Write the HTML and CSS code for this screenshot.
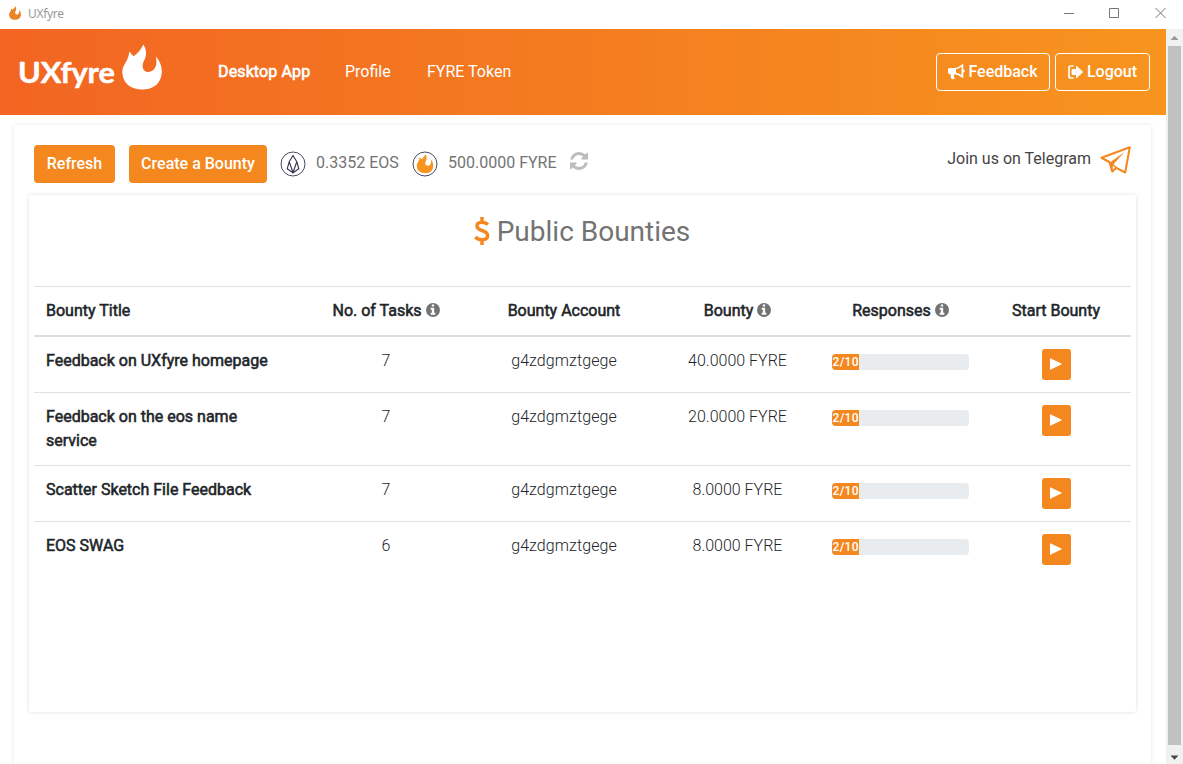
FILE: index.html
```html
<!DOCTYPE html>
<html lang="en">
<head>
<meta charset="utf-8">
<title>UXfyre</title>
<link rel="stylesheet" href="styles.css">
</head>
<body>
<svg class="sprite" aria-hidden="true">
  <symbol id="flame" viewBox="0 0 122 138"><path d="M22 22L35 36Q54 24 65 0C78 20 74 38 66 52C58 70 66 84 80 84C99 83 110 64 103 36C120 56 124 76 120 96C114 124 92 138 62 138C26 138 2 118 1 86C0 62 20 54 22 22Z"/></symbol>
  <symbol id="info" viewBox="0 0 1536 1536"><path fill-rule="evenodd" d="M1536 768a768 768 0 1 1-1536 0a768 768 0 0 1 1536 0zM1024 1248v-160q0-14-9-23t-23-9h-96V544q0-14-9-23t-23-9H544q-14 0-23 9t-9 23v160q0 14 9 23t23 9h96v320h-96q-14 0-23 9t-9 23v160q0 14 9 23t23 9h448q14 0 23-9t9-23zM896 352V192q0-14-9-23t-23-9H672q-14 0-23 9t-9 23v160q0 14 9 23t23 9h192q14 0 23-9t9-23z"/></symbol>
  <symbol id="play" viewBox="0 0 12 12"><path d="M.3.2Q0 0 0 .5v11q0 .5.4.3L11.700 6.300q.4-.3 0-.6z"/></symbol>
</svg>
<div class="titlebar">
  <svg class="app-icon"><use href="#flame"/></svg>
  <span class="app-name">UXfyre</span>
  <svg class="window-controls" viewBox="0 0 103 12" fill="none" stroke="#777"><path d="M0 6.500h10M45.500 1.500h9v9h-9zM91.500 1l10 10M101.500 1l-10 10"/></svg>
</div>
<div class="viewport">
  <div class="page">
    <header class="navbar">
      <div class="brand">
        <svg class="wordmark" viewBox="0 0 100 46"><text x="0" y="31" textLength="97" lengthAdjust="spacingAndGlyphs">UXfyre</text></svg>
        <svg class="brand-flame"><use href="#flame"/></svg>
      </div>
      <nav class="nav">
        <a class="nav-link active">Desktop App</a>
        <a class="nav-link profile">Profile</a>
        <a class="nav-link">FYRE Token</a>
      </nav>
      <div class="nav-actions">
        <a class="btn-outline"><svg class="horn" viewBox="0 0 17 16"><path fill-rule="evenodd" d="M14.600 0q.7 0 .7.800v4.700q1.500.3 1.500 1.500t-1.500 1.500v4.700q0 .8-.7.800-4.300-3.500-8.200-3.700-1.300.8-.3 2-.5 1 .9 1.900-.8 1.500-3.300 1-1.300-3-1-5H1.500Q0 10 0 8.600V5.600Q0 4.100 1.500 4.100h4.700Q10 4.100 14.600 0zM13.500 2.800Q10.500 5 8 5.300v3.500q2.800.4 5.500 2.200z"/></svg>Feedback</a>
        <a class="btn-outline logout"><svg class="exit" viewBox="0 0 15 14"><path d="M5.700 1H3Q1 1 1 3v8q0 2 2 2h2.700" fill="none" stroke="#fff" stroke-width="1.700"/><path d="M8 1.200q0-.8.7-.3l6 5.600q.4.500 0 1l-6 5.600q-.7.5-.7-.3V9.900H4.200q-.6 0-.6-.6V4.700q0-.6.6-.6H8z"/></svg>Logout</a>
      </div>
    </header>
    <main class="panel">
      <div class="toolbar">
        <button class="btn">Refresh</button>
        <button class="btn create">Create a Bounty</button>
        <svg class="coin" viewBox="0 0 26 26" fill="none" stroke="#34344e"><circle cx="13" cy="13" r="12" stroke-width=".9"/><path d="M13 4.500L9.200 10.800 7.200 17.800 13 21.800 18.800 17.800 16.800 10.800zM9.200 10.800L13 21.500 16.800 10.800" stroke-width="1.100"/></svg>
        <span class="balance eos">0.3352 EOS</span>
        <svg class="coin" viewBox="0 0 26 26"><circle cx="13" cy="13" r="12" fill="none" stroke="#34344e" stroke-width=".9"/><use class="coin-flame" href="#flame" x="4.500" y="3.200" width="17" height="19"/></svg>
        <span class="balance fyre">500.0000 FYRE</span>
        <svg class="sync" viewBox="0 0 1536 1536"><path d="M1511 928q0 5-1 7-64 268-268 434.500T764 1536q-146 0-282.500-55T238 1324l-129 129q-19 19-45 19t-45-19-19-45V960q0-26 19-45t45-19h448q26 0 45 19t19 45-19 45l-137 137q71 66 161 102t187 36q134 0 250-65t186-179q11-17 53-117 8-23 30-23h192q13 0 22.500 9.500t9.500 22.500zm25-800v448q0 26-19 45t-45 19h-448q-26 0-45-19t-19-45 19-45l138-138Q969 256 768 256q-134 0-250 65T332 500q-11 17-53 117-8 23-30 23H50q-13 0-22.500-9.500T18 608v-7q65-268 270-434.500T768 0q146 0 284 55.500T1297 212l130-129q19-19 45-19t45 19 19 45z"/></svg>
        <span class="telegram">Join us on Telegram</span>
        <svg class="plane" viewBox="0 0 32 30"><path d="M1.500 12.800L29.800 2.200 25.200 27.500 16.300 22.800 12.300 26.600 9.500 17.200z" fill="none" stroke="#f5871f" stroke-width="2" stroke-linejoin="round"/><path d="M1.500 12.800L9.500 17.800 24.500 7 13 19.800 12.300 26.600 9.500 17.800" fill="#f5871f" stroke="none"/><path d="M1.500 12.800L9.500 17.200M13 19.500L16.300 22.800" fill="none" stroke="#f5871f" stroke-width="1.600"/></svg>
      </div>
      <section class="card">
        <h1 class="heading"><svg class="dollar" viewBox="0 0 16 28"><path d="M14 7.500Q11.500 5.300 8 5.300 3 5.400 3 9q0 2.800 5 4.500 5.600 1.600 5.600 5.300 0 3.900-5.600 3.900-4 0-6.700-2.700M8 0v5.500M8 22v6" fill="none" stroke="#f5871f" stroke-width="3.500"/></svg>Public Bounties</h1>
        <table class="bounties">
          <colgroup><col class="c-title"><col class="c-tasks"><col class="c-account"><col class="c-bounty"><col class="c-resp"><col class="c-start"></colgroup>
          <thead><tr><th>Bounty Title</th><th>No. of Tasks <svg class="info"><use href="#info"/></svg></th><th>Bounty Account</th><th>Bounty <svg class="info"><use href="#info"/></svg></th><th>Responses <svg class="info"><use href="#info"/></svg></th><th>Start Bounty</th></tr></thead>
          <tbody>
            <tr><th>Feedback on UXfyre homepage</th><td>7</td><td class="account">g4zdgmztgege</td><td>40.0000 FYRE</td><td><div class="progress"><div class="bar">2/10</div></div></td><td><button class="play"><svg><use href="#play"/></svg></button></td></tr>
            <tr><th>Feedback on the eos name service</th><td>7</td><td class="account">g4zdgmztgege</td><td>20.0000 FYRE</td><td><div class="progress"><div class="bar">2/10</div></div></td><td><button class="play"><svg><use href="#play"/></svg></button></td></tr>
            <tr><th>Scatter Sketch File Feedback</th><td>7</td><td class="account">g4zdgmztgege</td><td>8.0000 FYRE</td><td><div class="progress"><div class="bar">2/10</div></div></td><td><button class="play"><svg><use href="#play"/></svg></button></td></tr>
            <tr><th>EOS SWAG</th><td>6</td><td class="account">g4zdgmztgege</td><td>8.0000 FYRE</td><td><div class="progress"><div class="bar">2/10</div></div></td><td><button class="play"><svg><use href="#play"/></svg></button></td></tr>
          </tbody>
        </table>
      </section>
    </main>
  </div>
  <div class="scrollbar">
    <svg class="arrow" viewBox="0 0 17 17"><path d="M4.500 11h8l-4-4.300z" fill="#999"/></svg>
    <div class="thumb"></div>
    <svg class="arrow" viewBox="0 0 17 17"><path d="M4.500 10.500h8l-4 4.300z" fill="#444"/></svg>
  </div>
</div>
</body>
</html>
```
FILE: styles.css
```css
* { box-sizing: border-box; }
body { margin: 0; height: 764px; overflow: hidden; display: flex; flex-direction: column; background: #fff; color: #212529; font: 300 16px/24px Roboto, sans-serif; }
svg { display: block; flex: none; }
button { border: 0; font-family: inherit; }
.sprite { width: 0; height: 0; position: absolute; }

.titlebar { height: 29px; flex: none; display: flex; align-items: center; padding: 0 16px 3px 9px; }
.app-icon { width: 12px; height: 14px; fill: #ea8526; }
.app-name { margin: 2px auto 0 7px; font: 400 12px/16px "Noto Sans", sans-serif; color: #999; letter-spacing: -.3px; }
.window-controls { width: 103px; height: 12px; }

.viewport { flex: 1; min-height: 0; display: flex; }
.page { width: 1166px; display: flex; flex-direction: column; }
.navbar { height: 86px; flex: none; display: flex; align-items: center; padding: 0 16px 0 18px; color: #fff; background: linear-gradient(90deg, #f26522, #f7941e); }
.brand { display: flex; align-items: flex-start; width: 200px; height: 56px; }
.wordmark { width: 100px; height: 46px; margin-top: 8px; overflow: visible; }
.wordmark text { font: 700 29px Lato, sans-serif; fill: #fff; stroke: #fff; stroke-width: .5px; stroke-linejoin: round; }
.brand-flame { width: 40px; height: 46px; margin-left: 4px; fill: #fff; }
.nav { display: flex; gap: 36px; font-weight: 400; }
.nav-link.active { width: 91px; -webkit-text-stroke: .6px; letter-spacing: .13px; white-space: nowrap; }
.nav-link.profile { width: 46px; }
.nav-actions { display: flex; gap: 5px; margin-left: auto; }
.btn-outline { width: 114px; height: 38px; display: flex; align-items: center; justify-content: center; gap: 3px; border: 1px solid #fff; border-radius: 4px; font-weight: 500; }
.logout { width: 95px; gap: 4px; }
.horn { width: 17px; height: 16px; fill: #fff; }
.exit { width: 15px; height: 14px; fill: #fff; }

.panel { flex: 1; min-height: 0; margin: 10px 15px 0 14px; padding: 20px 15px 0; box-shadow: 0 0 4px rgba(0, 0, 0, .1); }
.toolbar { height: 50px; display: flex; align-items: flex-start; padding: 0 4px 0 5px; }
.btn { width: 81px; height: 38px; padding: 0 0 2px; border-radius: 4px; background: #f5871f; color: #fff; font-size: 16px; font-weight: 500; }
.create { width: 138px; margin-left: 14px; margin-right: 13px; }
.coin { width: 26px; height: 26px; margin-top: 6px; }
.coin-flame { fill: #f7941e; }
.balance { margin: 6px 0 0 10px; color: #737373; font-weight: 400; white-space: nowrap; }
.eos { width: 96px; }
.fyre { width: 122px; }
.sync { width: 18px; height: 18px; margin-top: 7px; fill: #bcbcbc; }
.telegram { margin: 2px 9px 0 auto; font-weight: 400; color: #444; }
.plane { width: 32px; height: 30px; }

.card { height: 517px; padding: 19px 6px 0 5px; border-radius: 2px; box-shadow: 0 0 4px rgba(0, 0, 0, .13); }
.heading { margin: 0 0 36px; display: flex; justify-content: center; align-items: center; gap: 7px; height: 36px; font-size: 28px; font-weight: 400; color: #737373; }
.dollar { width: 16px; height: 28px; margin-bottom: 2px; }

.bounties { width: 1097px; table-layout: fixed; border-collapse: separate; border-spacing: 0; }
.c-title { width: 265px; }
.c-tasks { width: 174px; }
.c-account { width: 182px; }
.c-bounty { width: 165px; }
.c-resp { width: 161px; }
.c-start { width: 150px; }
.bounties th, .bounties td { padding: 12px; vertical-align: top; text-align: center; border-top: 1px solid #dee2e6; }
.bounties th { font-weight: 400; -webkit-text-stroke: .55px; }
.bounties .account { letter-spacing: .08px; }
.bounties th:first-child { text-align: left; }
.bounties thead th { height: 51px; border-bottom: 2px solid #dcdee0; }
.bounties tbody tr:first-child > * { border-top: 0; }
.info { display: inline-block; width: 14px; height: 14px; vertical-align: -1px; fill: #737373; }
.progress { display: flex; height: 16px; margin-top: 5px; overflow: hidden; border-radius: 4px; background: #e9ecef; }
.bar { width: 20%; display: flex; align-items: center; justify-content: center; background: #f5871f; color: #fff; font-size: 12px; font-weight: 500; letter-spacing: .3px; }
.play { width: 29px; height: 31px; display: flex; align-items: center; justify-content: center; margin: 0 auto; padding: 0 1px 1px 0; border-radius: 3px; background: #f5871f; }
.play svg { width: 12px; height: 12px; fill: #fff; }

.scrollbar { width: 17px; display: flex; flex-direction: column; align-items: center; background: #f1f1f1; }
.arrow { width: 17px; height: 17px; }
.thumb { width: 13px; height: 699px; background: #c1c1c1; }
```
